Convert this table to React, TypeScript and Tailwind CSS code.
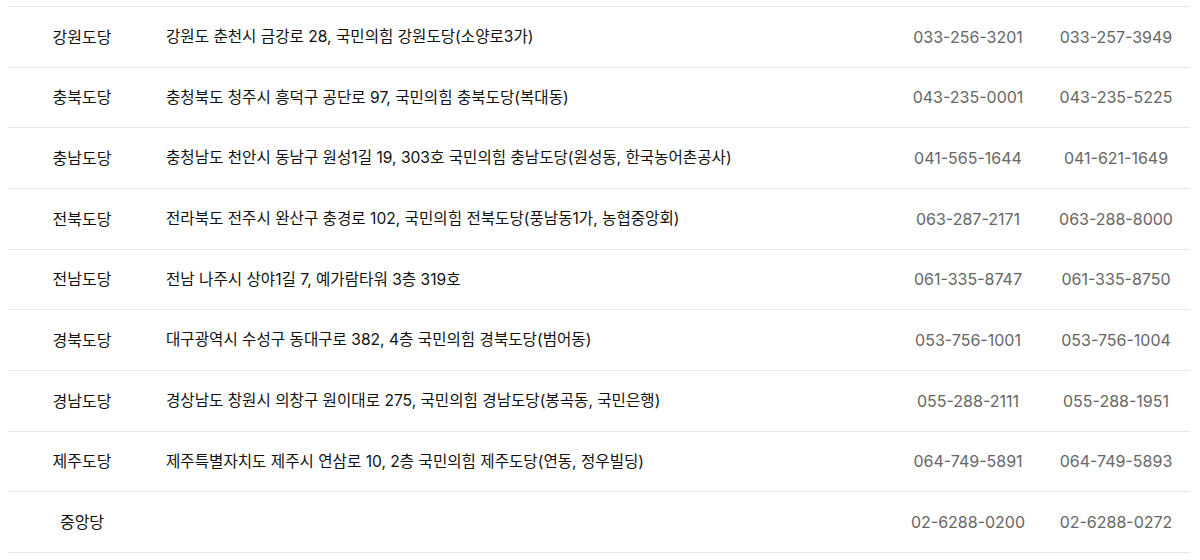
const rows = [
  { name: "강원도당", addr: "강원도 춘천시 금강로 28, 국민의힘 강원도당(소양로3가)", tel: "033-256-3201", fax: "033-257-3949" },
  { name: "충북도당", addr: "충청북도 청주시 흥덕구 공단로 97, 국민의힘 충북도당(복대동)", tel: "043-235-0001", fax: "043-235-5225" },
  { name: "충남도당", addr: "충청남도 천안시 동남구 원성1길 19, 303호 국민의힘 충남도당(원성동, 한국농어촌공사)", tel: "041-565-1644", fax: "041-621-1649" },
  { name: "전북도당", addr: "전라북도 전주시 완산구 충경로 102, 국민의힘 전북도당(풍남동1가, 농협중앙회)", tel: "063-287-2171", fax: "063-288-8000" },
  { name: "전남도당", addr: "전남 나주시 상야1길 7, 예가람타워 3층 319호", tel: "061-335-8747", fax: "061-335-8750" },
  { name: "경북도당", addr: "대구광역시 수성구 동대구로 382, 4층 국민의힘 경북도당(범어동)", tel: "053-756-1001", fax: "053-756-1004" },
  { name: "경남도당", addr: "경상남도 창원시 의창구 원이대로 275, 국민의힘 경남도당(봉곡동, 국민은행)", tel: "055-288-2111", fax: "055-288-1951" },
  { name: "제주도당", addr: "제주특별자치도 제주시 연삼로 10, 2층 국민의힘 제주도당(연동, 정우빌딩)", tel: "064-749-5891", fax: "064-749-5893" },
  { name: "중앙당", addr: "", tel: "02-6288-0200", fax: "02-6288-0272" },
];

export default function App() {
  return (
    <div className="w-[1200px] h-[560px] bg-white overflow-hidden pt-[6px] pl-[8px] font-['Inter','Noto_Sans_CJK_KR',sans-serif]">
      <div className="w-[1182px] border-t border-[#e6e6e6]">
        {rows.map((r) => (
          <div
            key={r.name}
            className="flex items-center h-[60.67px] border-b border-[#e6e6e6] text-[16px]"
          >
            <div className="w-[148px] text-center text-[#111]">{r.name}</div>
            <div className="flex-1 pl-[10px] text-[#111] text-[15.6px]">{r.addr}</div>
            <div className="w-[148px] text-center text-[#666]">{r.tel}</div>
            <div className="w-[148px] text-center text-[#666]">{r.fax}</div>
          </div>
        ))}
      </div>
    </div>
  );
}
